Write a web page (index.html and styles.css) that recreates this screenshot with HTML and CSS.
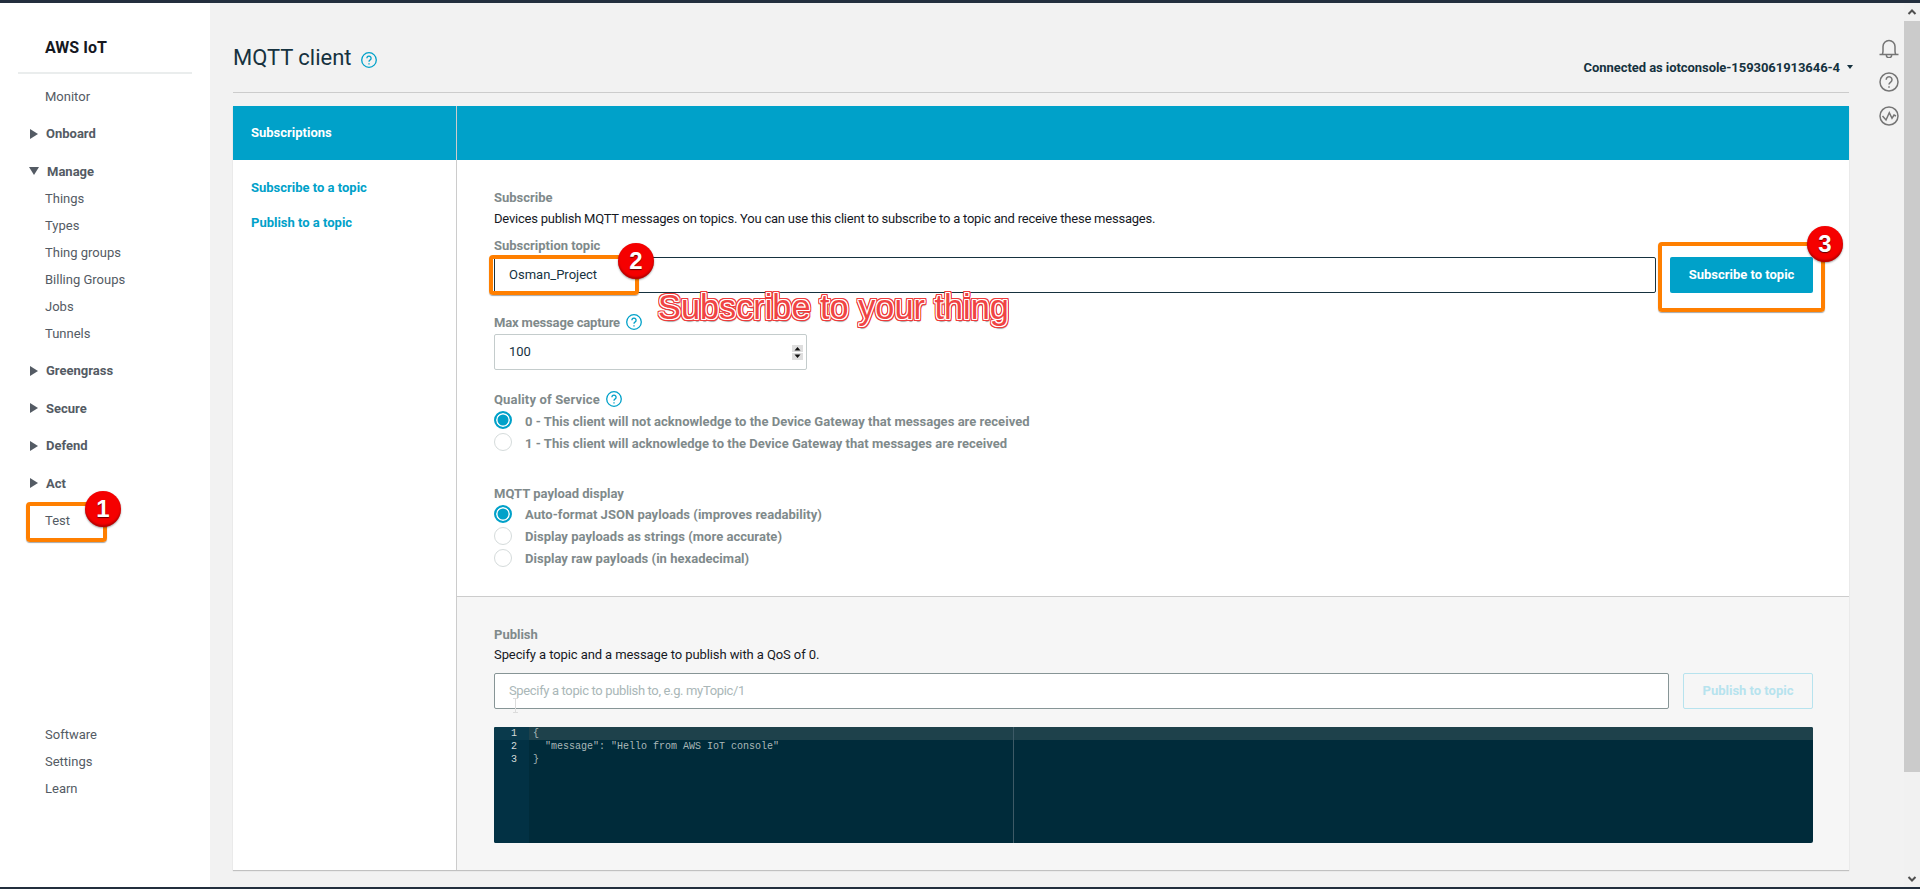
FILE: index.html
```html
<!DOCTYPE html>
<html lang="en">
<head>
    <meta charset="UTF-8">
    <title>MQTT client</title>
    <link rel="stylesheet" href="styles.css">
</head>
<body>
<div class="topbar"></div>
<div class="shell">
    <nav class="sidebar">
        <div class="brand">AWS IoT</div>
        <a class="nav-item nav-first">Monitor</a>
        <a class="nav-group"><span class="arrow-right"></span>Onboard</a>
        <a class="nav-group"><span class="arrow-down"></span>Manage</a>
        <a class="nav-item">Things</a>
        <a class="nav-item">Types</a>
        <a class="nav-item">Thing groups</a>
        <a class="nav-item">Billing Groups</a>
        <a class="nav-item">Jobs</a>
        <a class="nav-item">Tunnels</a>
        <a class="nav-group"><span class="arrow-right"></span>Greengrass</a>
        <a class="nav-group"><span class="arrow-right"></span>Secure</a>
        <a class="nav-group"><span class="arrow-right"></span>Defend</a>
        <a class="nav-group"><span class="arrow-right"></span>Act</a>
        <a class="nav-item nav-test">Test</a>
        <div class="nav-bottom">
            <a class="nav-item">Software</a>
            <a class="nav-item">Settings</a>
            <a class="nav-item">Learn</a>
        </div>
    </nav>

    <main class="main">
        <header class="page-head">
            <h1 class="page-title">MQTT client
                <svg class="help help-big" viewBox="0 0 16 16"><circle cx="8" cy="8" r="7.3"/><path d="M5.9 6.2a2.1 2.1 0 1 1 3.3 1.7c-.8.5-1.2.9-1.2 1.8M8 11.2v1.3"/></svg>
            </h1>
            <div class="connected">Connected as iotconsole-1593061913646-4<span class="caret"></span></div>
        </header>

        <section class="panel">
            <div class="panel-left">
                <div class="panel-tab">Subscriptions</div>
                <a class="side-link side-link-first">Subscribe to a topic</a>
                <a class="side-link">Publish to a topic</a>
            </div>
            <div class="panel-right">
                <div class="panel-band"></div>
                <div class="subscribe">
                    <div class="label">Subscribe</div>
                    <p class="desc">Devices publish MQTT messages on topics. You can use this client to subscribe to a topic and receive these messages.</p>
                    <div class="label label-topic">Subscription topic</div>
                    <div class="topic-row">
                        <input class="text-input text-focus" type="text" value="Osman_Project">
                        <button class="btn-primary">Subscribe to topic</button>
                    </div>
                    <div class="label label-capture">Max message capture
                        <svg class="help" viewBox="0 0 16 16"><circle cx="8" cy="8" r="7.3"/><path d="M5.9 6.2a2.1 2.1 0 1 1 3.3 1.7c-.8.5-1.2.9-1.2 1.8M8 11.2v1.3"/></svg>
                    </div>
                    <div class="number-field">
                        <span class="number-value">100</span>
                        <span class="spinner">
                            <svg viewBox="0 0 11 15"><path d="M0 0h11v7H0zM0 8h11v7H0z" fill="#dedede"/><path d="M5.5 2L8.5 5.5h-6zM5.5 13l3-3.500h-6z" fill="#111"/></svg>
                        </span>
                    </div>
                    <div class="label label-qos">Quality of Service
                        <svg class="help" viewBox="0 0 16 16"><circle cx="8" cy="8" r="7.3"/><path d="M5.9 6.2a2.1 2.1 0 1 1 3.3 1.7c-.8.5-1.2.9-1.2 1.8M8 11.2v1.3"/></svg>
                    </div>
                    <div class="radio-list radio-list-qos">
                        <div class="radio-row"><span class="radio radio-on"></span>0 - This client will not acknowledge to the Device Gateway that messages are received</div>
                        <div class="radio-row"><span class="radio"></span>1 - This client will acknowledge to the Device Gateway that messages are received</div>
                    </div>
                    <div class="label label-payload">MQTT payload display</div>
                    <div class="radio-list radio-list-payload">
                        <div class="radio-row"><span class="radio radio-on"></span>Auto-format JSON payloads (improves readability)</div>
                        <div class="radio-row"><span class="radio"></span>Display payloads as strings (more accurate)</div>
                        <div class="radio-row"><span class="radio"></span>Display raw payloads (in hexadecimal)</div>
                    </div>
                </div>
                <div class="publish">
                    <div class="label">Publish</div>
                    <p class="desc desc-publish">Specify a topic and a message to publish with a QoS of 0.</p>
                    <div class="topic-row topic-row-publish">
                        <input class="text-input" type="text" placeholder="Specify a topic to publish to, e.g. myTopic/1">
                        <button class="btn-disabled">Publish to topic</button>
                    </div>
                    <div class="editor">
                        <div class="gutter">
                            <div class="gutter-line gutter-active">1</div>
                            <div class="gutter-line">2</div>
                            <div class="gutter-line">3</div>
                        </div>
                        <div class="code">
                            <div class="code-line code-active">{</div>
                            <div class="code-line">  "message": "Hello from AWS IoT console"</div>
                            <div class="code-line">}</div>
                            <div class="print-margin"></div>
                        </div>
                    </div>
                </div>
            </div>
        </section>
    </main>

    <aside class="rail">
        <svg viewBox="0 0 20 20"><path d="M.5 16.500h19M3.200 16.500c.6-1 .8-2 .8-3.500V8.500a6 6 0 0 1 12 0V13c0 1.500.2 2.500.8 3.500M7.300 17a2.700 2.700 0 0 0 5.400 0"/></svg>
        <svg viewBox="0 0 20 20"><circle cx="10" cy="10" r="9"/><path d="M7.200 7.700a2.900 2.900 0 1 1 4.500 2.400c-1.100.7-1.700 1.200-1.700 2.500M10 14.200v1.600"/></svg>
        <svg viewBox="0 0 20 20"><circle cx="10" cy="10" r="9"/><path d="M3.500 10L7 14l3.300-7.300L13 12.300 15 9l2 1"/></svg>
    </aside>

    <div class="scrollbar">
        <span class="scroll-btn"><svg viewBox="0 0 10 10"><path d="M1.500 7L5 3.500 8.500 7"/></svg></span>
        <span class="scroll-thumb"></span>
        <span class="scroll-btn scroll-btn-down"><svg viewBox="0 0 10 10"><path d="M1.500 3L5 6.500 8.500 3"/></svg></span>
    </div>
</div>
<div class="bottombar"></div>

<!-- annotations drawn over the screenshot -->
<div class="mark-box mark-box-1"></div>
<div class="mark-box mark-box-2"></div>
<div class="mark-box mark-box-3"></div>
<div class="mark-num mark-num-1">1</div>
<div class="mark-num mark-num-2">2</div>
<div class="mark-num mark-num-3">3</div>
<div class="mark-text">Subscribe to your thing</div>
<svg class="ibeam" viewBox="0 0 7 15"><path d="M1 .5h5M3.500.5v14M1 14.500h5"/></svg>
</body>
</html>
```
FILE: styles.css
```css
*{
    box-sizing: border-box;
}
html,body{
    margin:0;
    height:889px;
    overflow:hidden;
}
body{
    position:relative;
    display:flex;
    flex-direction:column;
    background:#f2f2f2;
    font-family:Roboto,"Liberation Sans",sans-serif;
    font-size:13px;
    color:#16191f;
}
.topbar{
    height:3px;
    background:#232f3e;
}
.bottombar{
    height:2px;
    background:#232f3e;
}
.shell{
    flex:1;
    display:flex;
    min-height:0;
}

/* sidebar */
.sidebar{
    width:210px;
    background:#fff;
    display:flex;
    flex-direction:column;
    color:#545b64;
}
.brand{
    margin:0 18px 0 18px;
    padding:34px 0 16px 27px;
    height:71px;
    border-bottom:2px solid #eaeded;
    font-size:16px;
    line-height:22px;
    font-weight:700;
    color:#16191f;
}
.nav-item{
    display:block;
    height:27px;
    line-height:27px;
    padding-left:45px;
}
.nav-first{
    margin-top:9px;
}
.nav-group{
    display:flex;
    align-items:center;
    height:27px;
    margin-top:10.5px;
    padding:0 0 1px 30px;
    font-weight:700;
}
.arrow-right{
    width:0;
    height:0;
    margin-right:8px;
    border-left:8px solid #545b64;
    border-top:5px solid transparent;
    border-bottom:5px solid transparent;
}
.arrow-down{
    width:0;
    height:0;
    margin:0 8px 0 -1px;
    border-top:8px solid #545b64;
    border-left:5px solid transparent;
    border-right:5px solid transparent;
}
.nav-test{
    margin-top:10px;
}
.nav-bottom{
    margin-top:auto;
    padding-bottom:85px;
}

/* main column */
.main{
    flex:1;
    margin-left:23px;
    min-width:0;
}
.page-head{
    height:90px;
    padding-top:40px;
    display:flex;
    justify-content:space-between;
    align-items:flex-start;
    border-bottom:1px solid #ccc;
}
.page-title{
    margin:0;
    font-size:22px;
    line-height:30px;
    font-weight:400;
    color:#16323f;
    display:flex;
    align-items:center;
}
.connected{
    margin-top:16px;
    margin-right:-4px;
    font-weight:700;
    line-height:18px;
    letter-spacing:-.06px;
    color:#16323f;
    display:flex;
    align-items:center;
}
.caret{
    width:0;
    height:0;
    margin-left:7px;
    margin-top:-2px;
    border-top:4px solid #16323f;
    border-left:3.5px solid transparent;
    border-right:3.5px solid transparent;
}
.help{
    width:16px;
    height:16px;
    margin-left:5px;
    fill:none;
    stroke:#00a1c9;
    stroke-width:1.3;
    vertical-align:-3px;
}
.help-big{
    margin-left:9px;
    margin-top:3px;
}

/* panel */
.panel{
    display:flex;
    margin-top:13px;
    height:764px;
    background:#fff;
    box-shadow:0 1px 1px rgba(0,0,0,.2);
}
.panel-left{
    width:224px;
    border-right:1px solid #ccc;
    flex-shrink:0;
}
.panel-tab{
    height:54px;
    line-height:54px;
    padding-left:18px;
    background:#00a1c9;
    color:#fff;
    font-weight:700;
}
.side-link{
    display:block;
    padding-left:18px;
    line-height:18px;
    font-weight:700;
    color:#00a1c9;
    margin-bottom:17px;
}
.side-link-first{
    margin-top:19px;
}
.panel-right{
    flex:1;
    min-width:0;
    display:flex;
    flex-direction:column;
}
.panel-band{
    height:54px;
    background:#00a1c9;
}
.subscribe{
    padding:29px 36px 27px 37px;
    border-bottom:1px solid #ccc;
}
.publish{
    flex:1;
    padding:29px 36px 0 37px;
    background:#f6f6f6;
}
.label{
    line-height:18px;
    font-weight:700;
    color:#7f8a8b;
}
.desc{
    margin:3px 0 0;
    line-height:18px;
    letter-spacing:-.22px;
}
.desc-publish{
    margin-top:2px;
    letter-spacing:-.09px;
}
.label-topic{
    margin-top:9px;
}
.label-capture{
    margin-top:21px;
    letter-spacing:-.15px;
}
.label-capture .help{
    margin-left:3px;
}
.label-qos{
    margin-top:21px;
    letter-spacing:.15px;
}
.label-qos .help{
    margin-left:3px;
}
.label-payload{
    margin-top:31px;
}

/* form controls */
.topic-row{
    display:flex;
    gap:14px;
    margin-top:2px;
}
.topic-row-publish{
    margin-top:9px;
}
.text-input{
    flex:1;
    height:36px;
    padding:0 14px 2px;
    border:1px solid #879596;
    border-radius:2px;
    background:#fff;
    font:13px Roboto,"Liberation Sans",sans-serif;
    color:#16323f;
    outline:none;
}
.text-input::placeholder{
    color:#aab7b8;
    letter-spacing:-.35px;
}
.text-focus{
    border-color:#16323f;
}
.btn-primary,.btn-disabled{
    width:143px;
    height:36px;
    padding:0 0 2px;
    border-radius:2px;
    font:700 13px Roboto,"Liberation Sans",sans-serif;
}
.btn-primary{
    border:0;
    background:#00a1c9;
    color:#fff;
}
.btn-disabled{
    border:1px solid #b7e3ee;
    background:transparent;
    color:#b7e3ee;
    width:130px;
}
.number-field{
    display:flex;
    align-items:center;
    justify-content:space-between;
    width:313px;
    height:36px;
    margin-top:2px;
    padding:0 3px 2px 14px;
    border:1px solid #c4cccc;
    border-radius:2px;
    color:#16323f;
}
.spinner{
    display:flex;
    margin-top:2px;
}
.spinner svg{
    width:11px;
    height:15px;
}
.radio-list-qos{
    margin-top:1px;
}
.radio-row{
    display:flex;
    align-items:center;
    height:22px;
    font-weight:700;
    letter-spacing:.03px;
    color:#7f8a8b;
}
.radio{
    width:18px;
    height:18px;
    margin:-2px 13px 0 0;
    border:1px solid #d5dbdb;
    border-radius:50%;
    background:#fff;
    flex-shrink:0;
}
.radio-list-payload .radio{
    margin-top:0;
}
.radio-on{
    border:2px solid #00a1c9;
    box-shadow:inset 0 0 0 1.5px #fff;
    background:#00a1c9;
}

/* editor */
.editor{
    display:flex;
    height:116px;
    margin-top:18px;
    border-radius:2px;
    overflow:hidden;
    background:#002b3a;
    font-family:"Liberation Mono",monospace;
    font-size:10px;
    line-height:13px;
    color:#aab7b8;
}
.gutter{
    width:35px;
    background:#023144;
    color:#d5dbdb;
    text-align:right;
    flex-shrink:0;
}
.gutter-line{
    padding-right:12px;
}
.gutter-active{
    background:#0a3a4c;
}
.code{
    flex:1;
    position:relative;
}
.code-line{
    height:13px;
    padding-left:4px;
    white-space:pre;
}
.code-active{
    background:#1e414b;
}
.print-margin{
    position:absolute;
    top:0;
    bottom:0;
    left:484px;
    width:1px;
    background:#3d5a66;
}

/* right rail and scrollbar */
.rail{
    width:55px;
    padding:35px 0 0 30px;
    display:flex;
    flex-direction:column;
    gap:14px;
}
.rail svg{
    width:20px;
    height:20px;
    fill:none;
    stroke:#757575;
    stroke-width:1.5;
}
.scrollbar{
    width:16px;
    display:flex;
    flex-direction:column;
    background:#f1f1f1;
}
.scroll-btn{
    height:18px;
    display:flex;
    align-items:center;
    justify-content:center;
}
.scroll-btn svg{
    width:10px;
    height:10px;
    fill:none;
    stroke:#505050;
    stroke-width:2;
}
.scroll-thumb{
    height:751px;
    background:#cbcbcb;
}
.scroll-btn-down{
    margin-top:auto;
    height:16px;
}

/* annotations */
.mark-box{
    position:absolute;
    border:4px solid #ff7f00;
    border-radius:4px;
    box-shadow:0 1px 1px rgba(0,0,0,.35);
}
.mark-box-1{
    left:26px;
    top:502px;
    width:81px;
    height:40px;
}
.mark-box-2{
    left:489px;
    top:255px;
    width:150px;
    height:40px;
}
.mark-box-3{
    left:1658px;
    top:242px;
    width:167px;
    height:70px;
}
.mark-num{
    position:absolute;
    width:36px;
    height:36px;
    border-radius:50%;
    background:#f50000;
    box-shadow:inset 0 -2px 2px rgba(120,0,0,.5),0 1px 2px rgba(0,0,0,.4);
    color:#fff;
    font:700 24px/36px "Liberation Sans",sans-serif;
    text-align:center;
    text-shadow:0 1px 1px rgba(0,0,0,.6);
}
.mark-num-1{
    left:85px;
    top:491px;
}
.mark-num-2{
    left:618px;
    top:243px;
}
.mark-num-3{
    left:1807px;
    top:226px;
}
.mark-text{
    position:absolute;
    left:658px;
    top:288px;
    font:34.3px/38px "Liberation Sans",sans-serif;
    color:#f04444;
    text-shadow:
        1px 0 #fff,-1px 0 #fff,0 1px #fff,0 -1px #fff,
        1px 1px #fff,-1px 1px #fff,1px -1px #fff,-1px -1px #fff,
        2px 0 #ee3b3b,-2px 0 #ee3b3b,0 2px #ee3b3b,0 -2px #ee3b3b,
        2px 1px #ee3b3b,-2px 1px #ee3b3b,2px -1px #ee3b3b,-2px -1px #ee3b3b,
        1px 2px #ee3b3b,-1px 2px #ee3b3b,1px -2px #ee3b3b,-1px -2px #ee3b3b,
        2px 2px #ee3b3b,-2px 2px #ee3b3b,2px -2px #ee3b3b,-2px -2px #ee3b3b,
        1px 3px 1px rgba(0,0,0,.35);
    white-space:nowrap;
}
.ibeam{
    position:absolute;
    left:512px;
    top:698px;
    width:7px;
    height:15px;
    fill:none;
    stroke:#dcdcdc;
    stroke-width:1;
}
```
